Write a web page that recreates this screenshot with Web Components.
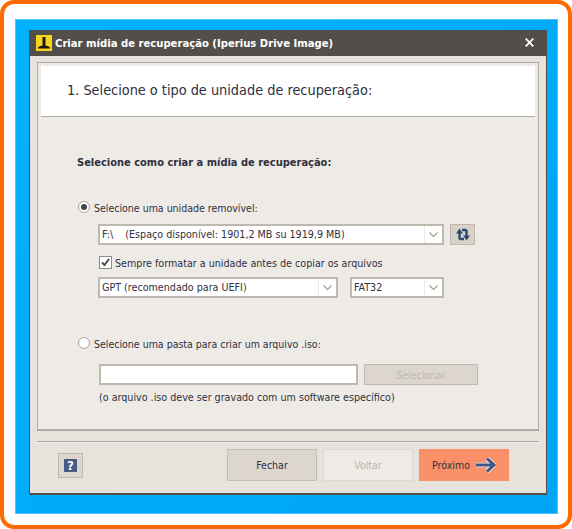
<!DOCTYPE html>
<html lang="pt">
<head>
<meta charset="utf-8">
<title>Criar mídia de recuperação</title>
<style>
    html, body { margin: 0; padding: 0; }
    body { width: 572px; height: 529px; overflow: hidden; font: 10.5px "DejaVu Sans Condensed", "DejaVu Sans", sans-serif; color: #2f3040; }
</style>
</head>
<body>
<screen-frame>
    <dialog-window heading="Criar mídia de recuperação (Iperius Drive Image)">
        <step-header>1. Selecione o tipo de unidade de recuperação:</step-header>
        <recovery-form></recovery-form>
    </dialog-window>
</screen-frame>

<script>
class ScreenFrame extends HTMLElement {
    connectedCallback() {
        if (this.shadowRoot) return;
        this.attachShadow({mode: "open"}).innerHTML = `
            <style>
                :host { display: block; box-sizing: border-box; width: 572px; height: 529px; background: #fff; border: 4px solid #ff6a00; border-radius: 14px; padding: 15px 10px 11px 11px; }
                .desktop { box-sizing: border-box; height: 100%; padding: 10px 10px 19px 13px; border: 1px solid #4cc4fb; background: linear-gradient(135deg, #00b2ff 0%, #00a4f6 100%); }
            </style>
            <div class="desktop"><slot></slot></div>`;
    }
}

class DialogWindow extends HTMLElement {
    connectedCallback() {
        if (this.shadowRoot) return;
        this.attachShadow({mode: "open"}).innerHTML = `
            <style>
                :host { display: flex; flex-direction: column; box-sizing: border-box; height: 465px; border: solid #524f4a; border-width: 0 1px 2px 1px; background: #e6e2dc; }
                .bar { display: flex; align-items: center; flex: none; height: 26px; padding: 0 12px 0 6px; background: #524f4a; color: #fff; font-size: 11.200px; font-weight: bold; gap: 3px; }
                .bar span { flex: 1; }
                .logo { width: 16px; height: 16px; background: #f7d31c; }
                .close { width: 9px; height: 9px; margin-top: -1px; }
                .body { flex: 1; display: flex; flex-direction: column; padding: 6px 7px 0; }
                .group { box-sizing: border-box; height: 369px; border: 1px solid #b0aca5; border-width: 1px 1px 2px 1px; padding: 3px; background: #eeebe6; display: flex; flex-direction: column; }
                .rule { height: 1px; margin-top: 10px; background: #b0aca5; box-shadow: 0 1px 0 #f2efea; }
                .footer { display: flex; align-items: center; padding: 7px 30px 0 21px; }
                .footer .space { flex: 1; }
                .buttons { display: flex; gap: 6px; }
                .help { display: flex; align-items: center; justify-content: center; box-sizing: border-box; width: 25px; height: 25px; border: 1px solid #bdb8b0; background: #dcd6ce; }
                .help svg { width: 13px; height: 13px; }
            </style>
            <div class="bar">
                <svg class="logo" viewBox="0 0 16 16">
                    <path d="M6.500 2h3v8.500q3 .5 4.500 2v1h-12v-1q1.500-1.500 4.500-2z" fill="#1c1a10"/>
                </svg>
                <span>${this.getAttribute("heading")}</span>
                <svg class="close" viewBox="0 0 9 9"><path d="M.7.7l7.600 7.600M8.300.7L.7 8.300" stroke="#fff" stroke-width="1.800"/></svg>
            </div>
            <div class="body">
                <div class="group"><slot></slot></div>
                <div class="rule"></div>
                <div class="footer">
                    <div class="help">
                        <svg viewBox="0 0 13 13"><rect width="13" height="13" fill="#4a5a86"/><text x="6.500" y="11" text-anchor="middle" fill="#fff" font-size="12" font-weight="bold" font-family="DejaVu Sans">?</text></svg>
                    </div>
                    <div class="space"></div>
                    <div class="buttons">
                        <wizard-button>Fechar</wizard-button>
                        <wizard-button disabled>Voltar</wizard-button>
                        <wizard-button primary>Próximo</wizard-button>
                    </div>
                </div>
            </div>`;
    }
}

class StepHeader extends HTMLElement {
    connectedCallback() {
        if (this.shadowRoot) return;
        this.attachShadow({mode: "open"}).innerHTML = `
            <style>
                :host { display: flex; align-items: center; flex: none; box-sizing: border-box; height: 51px; padding: 0 26px 2px; background: #fff; border-bottom: 1px solid #b0aca5; font-size: 14.350px; }
            </style>
            <slot></slot>`;
    }
}

class WizardButton extends HTMLElement {
    connectedCallback() {
        if (this.shadowRoot) return;
        this.attachShadow({mode: "open"}).innerHTML = `
            <style>
                :host { display: flex; align-items: center; justify-content: center; gap: 5px; box-sizing: border-box; width: 90px; height: 32px; border: 1px solid #c4bfb7; background: #dcd6ce; }
                :host([disabled]) { background: #eeebe6; border-color: #dcd8d1; color: #b9b6b0; }
                :host([primary]) { background: #fa9068; border-color: #fa9068; }
                svg { display: none; width: 21px; height: 18px; }
                :host([primary]) svg { display: block; }
            </style>
            <slot></slot>
            <svg viewBox="0 0 21 18">
                <path d="M1 9h17M12 2.500L19 9l-7 6.500" fill="none" stroke="#f4eee8" stroke-width="4.600"/>
                <path d="M1 9h17M12 2.500L19 9l-7 6.500" fill="none" stroke="#3f5488" stroke-width="3"/>
            </svg>`;
    }
}

class ComboBox extends HTMLElement {
    connectedCallback() {
        if (this.shadowRoot) return;
        this.attachShadow({mode: "open"}).innerHTML = `
            <style>
                :host { display: flex; box-sizing: border-box; height: 21px; border: 2px solid #bdb8b0; background: #fff; font-size: 10.650px; }
                .value { flex: 1; padding-left: 2px; line-height: 18px; white-space: pre; overflow: hidden; }
                .arrow { display: flex; align-items: center; justify-content: center; width: 17px; border-left: 1px solid #eeebe6; }
                svg { width: 9px; height: 5px; }
            </style>
            <div class="value"><slot></slot></div>
            <div class="arrow"><svg viewBox="0 0 9 5"><path d="M.5.5l4 4 4-4" fill="none" stroke="#a5a29c" stroke-width="1.300"/></svg></div>`;
    }
}

class RadioOption extends HTMLElement {
    connectedCallback() {
        if (this.shadowRoot) return;
        this.attachShadow({mode: "open"}).innerHTML = `
            <style>
                :host { display: flex; align-items: center; gap: 4px; height: 14px; padding-left: 1px; }
                .dot { position: relative; box-sizing: border-box; width: 12px; height: 12px; border: 1px solid #a9a59e; border-radius: 50%; background: #fff; }
                :host([checked]) .dot::after { content: ""; position: absolute; left: 2px; top: 2px; width: 6px; height: 6px; border-radius: 50%; background: #44444c; }
                span { position: relative; top: 1px; }
            </style>
            <div class="dot"></div>
            <span><slot></slot></span>`;
    }
}

class CheckOption extends HTMLElement {
    connectedCallback() {
        if (this.shadowRoot) return;
        this.attachShadow({mode: "open"}).innerHTML = `
            <style>
                :host { display: flex; align-items: center; gap: 3px; height: 14px; font-size: 10.650px; }
                .box { box-sizing: border-box; width: 13px; height: 13px; border: 1px solid #8f8b85; background: #fff; }
                svg { display: block; width: 11px; height: 11px; }
                span { position: relative; top: 1px; }
            </style>
            <div class="box"><svg viewBox="0 0 11 11"><path d="M2 5.500l2.500 2.500 4.500-6" fill="none" stroke="#4a4a55" stroke-width="2"/></svg></div>
            <span><slot></slot></span>`;
    }
}

class RecoveryForm extends HTMLElement {
    connectedCallback() {
        if (this.shadowRoot) return;
        this.attachShadow({mode: "open"}).innerHTML = `
            <style>
                :host { display: flex; flex-direction: column; flex: 1; padding: 39px 0 0 36px; }
                h2 { margin: 0; font-size: 11px; line-height: 14px; font-weight: bold; }
                .indented { padding-left: 21px; }
                .row { display: flex; }
                .drive { margin-top: 10px; gap: 6px; }
                .drive combo-box { width: 346px; }
                .refresh { display: flex; align-items: center; justify-content: center; box-sizing: border-box; width: 25px; height: 21px; border: 1px solid #bdb8b0; background: #d8d1c8; }
                .refresh svg { width: 14px; height: 13px; }
                .always { margin: 10px 0 0 1px; }
                .format { margin-top: 8px; gap: 12px; }
                .format combo-box:first-child { width: 240px; }
                .format combo-box:last-child { width: 94px; }
                .iso { margin-top: 38px; }
                .pick { margin-top: 14px; padding-left: 22px; gap: 6px; }
                .field { box-sizing: border-box; width: 259px; height: 21px; border: 2px solid #bdb8b0; background: #fff; }
                .select { display: flex; align-items: center; justify-content: center; box-sizing: border-box; width: 114px; height: 21px; border: 1px solid #bdb8b0; background: #dcd6ce; color: #bcb9b3; }
                .note { margin: 6px 0 0 22px; line-height: 14px; font-size: 10.650px; }
            </style>
            <h2>Selecione como criar a mídia de recuperação:</h2>
            <radio-option checked style="margin-top:30px">Selecione uma unidade removível:</radio-option>
            <div class="indented">
                <div class="row drive">
                    <combo-box>F:\\    (Espaço disponível: 1901,2 MB su 1919,9 MB)</combo-box>
                    <div class="refresh">
                        <svg viewBox="0 0 14 13">
                            <path d="M3.500 5v4.500q0 1.500 1.500 1.500h3M10.500 8V3.500Q10.500 2 9 2H6" fill="none" stroke="#2f4a6f" stroke-width="2.400"/>
                            <path d="M0 5.500L3.500 .5 7 5.500zM7 7.500l3.500 5 3.500-5z" fill="#2f4a6f"/>
                        </svg>
                    </div>
                </div>
                <check-option class="always">Sempre formatar a unidade antes de copiar os arquivos</check-option>
                <div class="row format">
                    <combo-box>GPT (recomendado para UEFI)</combo-box>
                    <combo-box>FAT32</combo-box>
                </div>
            </div>
            <radio-option class="iso">Selecione uma pasta para criar um arquivo .iso:</radio-option>
            <div class="row pick">
                <div class="field"></div>
                <div class="select">Selecionar</div>
            </div>
            <div class="note">(o arquivo .iso deve ser gravado com um software específico)</div>`;
    }
}

customElements.define("screen-frame", ScreenFrame);
customElements.define("dialog-window", DialogWindow);
customElements.define("step-header", StepHeader);
customElements.define("wizard-button", WizardButton);
customElements.define("combo-box", ComboBox);
customElements.define("radio-option", RadioOption);
customElements.define("check-option", CheckOption);
customElements.define("recovery-form", RecoveryForm);
</script>
</body>
</html>
